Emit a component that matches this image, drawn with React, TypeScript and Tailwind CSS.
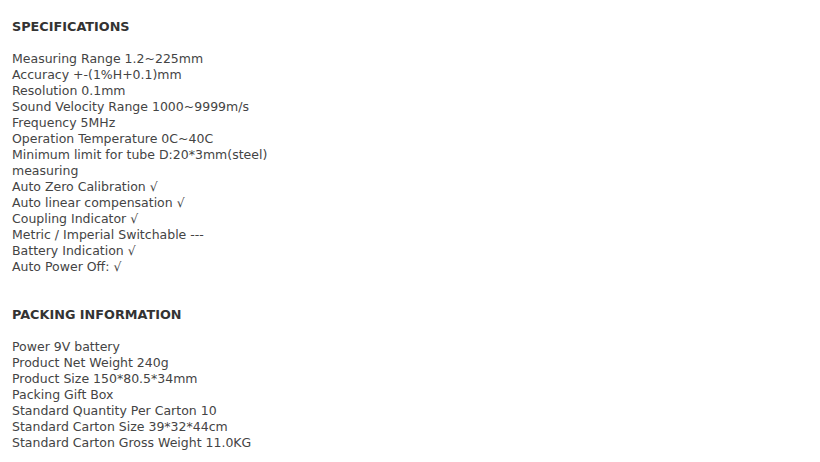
const specs = [
  "Measuring Range 1.2~225mm",
  "Accuracy +-(1%H+0.1)mm",
  "Resolution 0.1mm",
  "Sound Velocity Range 1000~9999m/s",
  "Frequency 5MHz",
  "Operation Temperature 0C~40C",
  "Minimum limit for tube D:20*3mm(steel)",
  "measuring",
  "Auto Zero Calibration √",
  "Auto linear compensation √",
  "Coupling Indicator √",
  "Metric / Imperial Switchable ---",
  "Battery Indication √",
  "Auto Power Off: √",
];

const packing = [
  "Power 9V battery",
  "Product Net Weight 240g",
  "Product Size 150*80.5*34mm",
  "Packing Gift Box",
  "Standard Quantity Per Carton 10",
  "Standard Carton Size 39*32*44cm",
  "Standard Carton Gross Weight 11.0KG",
];

const Section = ({ title, lines }: { title: string; lines: string[] }) => (
  <div className="flex flex-col">
    <p className="font-bold text-[#333] text-[12.8px]">{title}</p>
    <p className="h-4"></p>
    {lines.map((l) => (
      <p key={l}>{l}</p>
    ))}
  </div>
);

export default function App() {
  return (
    <div className="w-[820px] h-[462px] bg-white pt-[19px] pl-3 text-[12.5px] leading-4 text-[#444] font-['DejaVu_Sans',Verdana,sans-serif]">
      <Section title="SPECIFICATIONS" lines={specs} />
      <div className="h-8"></div>
      <Section title="PACKING INFORMATION" lines={packing} />
    </div>
  );
}
